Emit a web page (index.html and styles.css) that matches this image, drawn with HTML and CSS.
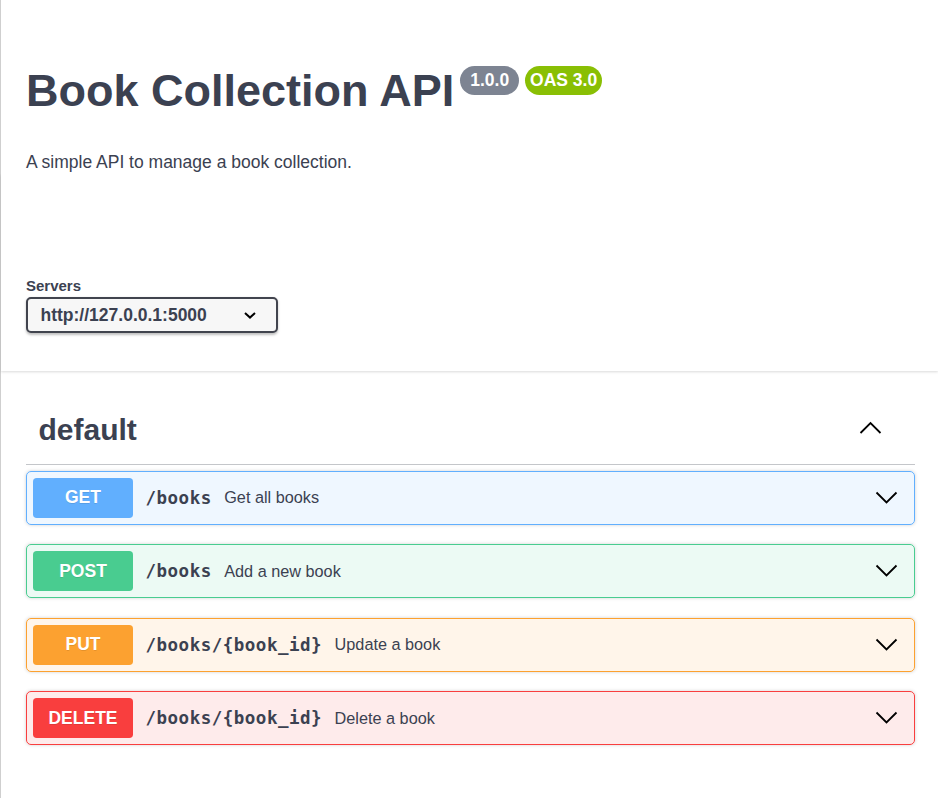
FILE: index.html
```html
<!DOCTYPE html>
<html lang="en">
<head>
<meta charset="utf-8">
<title>Book Collection API</title>
<link rel="stylesheet" href="styles.css">
</head>
<body>
<div class="page">
  <section class="info">
    <div class="title-row">
      <h1 class="title">Book Collection API</h1>
      <span class="badge badge-version"> 1.0.0 </span>
      <span class="badge badge-oas">OAS 3.0</span>
    </div>
    <p class="description">A simple API to manage a book collection.</p>
  </section>

  <section class="scheme">
    <div class="servers-label">Servers</div>
    <div class="select">
      <span class="select-text">http://127.0.0.1:5000</span>
      <svg class="select-arrow" width="12" height="7" viewBox="0 0 12 7"><polyline points="1,1 6,5.6 11,1" fill="none" stroke="#000" stroke-width="2"/></svg>
    </div>
  </section>

  <section class="ops">
    <div class="tag">
      <h3 class="tag-name">default</h3>
      <svg class="tag-arrow" width="23" height="13" viewBox="0 0 23 13"><polyline points="1.5,12 11.5,2 21.5,12" fill="none" stroke="#000" stroke-width="1.8"/></svg>
    </div>

    <div class="opblock get">
      <span class="method">GET</span>
      <span class="path">/books</span>
      <span class="summary">Get all books</span>
      <svg class="op-arrow" width="23" height="13" viewBox="0 0 23 13"><polyline points="1.5,1.5 11.5,11.5 21.5,1.5" fill="none" stroke="#000" stroke-width="1.8"/></svg>
    </div>

    <div class="opblock post">
      <span class="method">POST</span>
      <span class="path">/books</span>
      <span class="summary">Add a new book</span>
      <svg class="op-arrow" width="23" height="13" viewBox="0 0 23 13"><polyline points="1.5,1.5 11.5,11.5 21.5,1.5" fill="none" stroke="#000" stroke-width="1.8"/></svg>
    </div>

    <div class="opblock put">
      <span class="method">PUT</span>
      <span class="path">/books/{book_id}</span>
      <span class="summary">Update a book</span>
      <svg class="op-arrow" width="23" height="13" viewBox="0 0 23 13"><polyline points="1.5,1.5 11.5,11.5 21.5,1.5" fill="none" stroke="#000" stroke-width="1.8"/></svg>
    </div>

    <div class="opblock delete">
      <span class="method">DELETE</span>
      <span class="path">/books/{book_id}</span>
      <span class="summary">Delete a book</span>
      <svg class="op-arrow" width="23" height="13" viewBox="0 0 23 13"><polyline points="1.5,1.5 11.5,11.5 21.5,1.5" fill="none" stroke="#000" stroke-width="1.8"/></svg>
    </div>
  </section>
</div>
</body>
</html>
```

FILE: styles.css
```css
* { box-sizing: border-box; }

html, body {
  margin: 0;
  padding: 0;
  background: #fff;
}

body {
  font-family: "Liberation Sans", Arial, sans-serif;
  color: #3b4151;
}

.page {
  min-height: 100vh;
  border-left: 1px solid #cfcfcf;
}

/* ---------- info ---------- */
.info {
  padding: 64px 23px 0 25px;
}

.title-row {
  display: flex;
  align-items: flex-start;
}

.title {
  margin: 0;
  font-size: 45px;
  line-height: 54px;
  font-weight: 700;
  color: #3b4151;
}

.badge {
  margin-top: 1.5px;
  margin-left: 7px;
  padding: 3px 5px;
  border-radius: 70px;
  color: #fff;
  font-size: 17.5px;
  font-weight: 700;
  line-height: 23px;
  white-space: pre;
}

.badge-version { background: #7d8492; margin-left: 6px; }
.badge-oas { background: #89bf04; margin-left: 6px; }

.description {
  margin: 32px 0 0;
  font-size: 17.5px;
  line-height: 24px;
}

/* ---------- servers ---------- */
.scheme {
  padding: 103px 23px 37.5px 25px;
  background: #fff;
  box-shadow: 0 1.25px 2.5px 0 rgba(0, 0, 0, 0.15);
  clip-path: inset(0 -10px -10px -10px);
}

.servers-label {
  font-size: 15px;
  font-weight: 700;
  line-height: 18px;
  margin-bottom: 2px;
}

.select {
  width: 252px;
  height: 36px;
  display: flex;
  align-items: center;
  justify-content: space-between;
  padding: 0 20px 0 12.5px;
  border: 2px solid #41444e;
  border-radius: 5px;
  background: #f7f7f7;
  box-shadow: 0 1.25px 2.5px 0 rgba(0, 0, 0, 0.25);
}

.select-text {
  font-size: 17.5px;
  font-weight: 700;
  color: #3b4151;
}

.select-arrow { display: block; margin-top: 1px; }

/* ---------- operations ---------- */
.ops {
  padding: 25px 23px 25px 25px;
}

.tag {
  display: flex;
  align-items: center;
  justify-content: space-between;
  height: 69px;
  padding: 12.5px 33px 12.5px 12.5px;
  border-bottom: 1px solid rgba(59, 65, 81, 0.3);
  margin-bottom: 6px;
}

.tag-name {
  margin: 0;
  font-size: 30px;
  line-height: 43px;
  font-weight: 700;
  color: #3b4151;
}

.tag-arrow { display: block; margin-top: -4px; }

.opblock {
  display: flex;
  align-items: center;
  height: 54px;
  padding: 6px 16px 6px 6px;
  margin-bottom: 19.5px;
  border: 1px solid;
  border-radius: 5px;
  box-shadow: 0 0 3.75px rgba(0, 0, 0, 0.19);
}

.method {
  flex: none;
  width: 100px;
  height: 40px;
  display: flex;
  align-items: center;
  justify-content: center;
  border-radius: 3.75px;
  color: #fff;
  font-size: 17.5px;
  font-weight: 700;
  text-shadow: 0 1px 0 rgba(0, 0, 0, 0.1);
}

.path {
  flex: none;
  padding: 0 12.5px;
  font-family: "DejaVu Sans Mono", monospace;
  font-size: 17.5px;
  font-weight: 700;
  letter-spacing: 0.5px;
  color: #3b4151;
}

.summary {
  flex: 1 1 auto;
  font-size: 16.25px;
  color: #3b4151;
}

.op-arrow { display: block; flex: none; margin-top: -1px; }

.get { background: rgba(97, 175, 254, 0.1); border-color: #61affe; }
.get .method { background: #61affe; }

.post { background: rgba(73, 204, 144, 0.1); border-color: #49cc90; }
.post .method { background: #49cc90; }

.put { background: rgba(252, 161, 48, 0.1); border-color: #fca130; }
.put .method { background: #fca130; }

.delete { background: rgba(249, 62, 62, 0.1); border-color: #f93e3e; }
.delete .method { background: #f93e3e; }
```
